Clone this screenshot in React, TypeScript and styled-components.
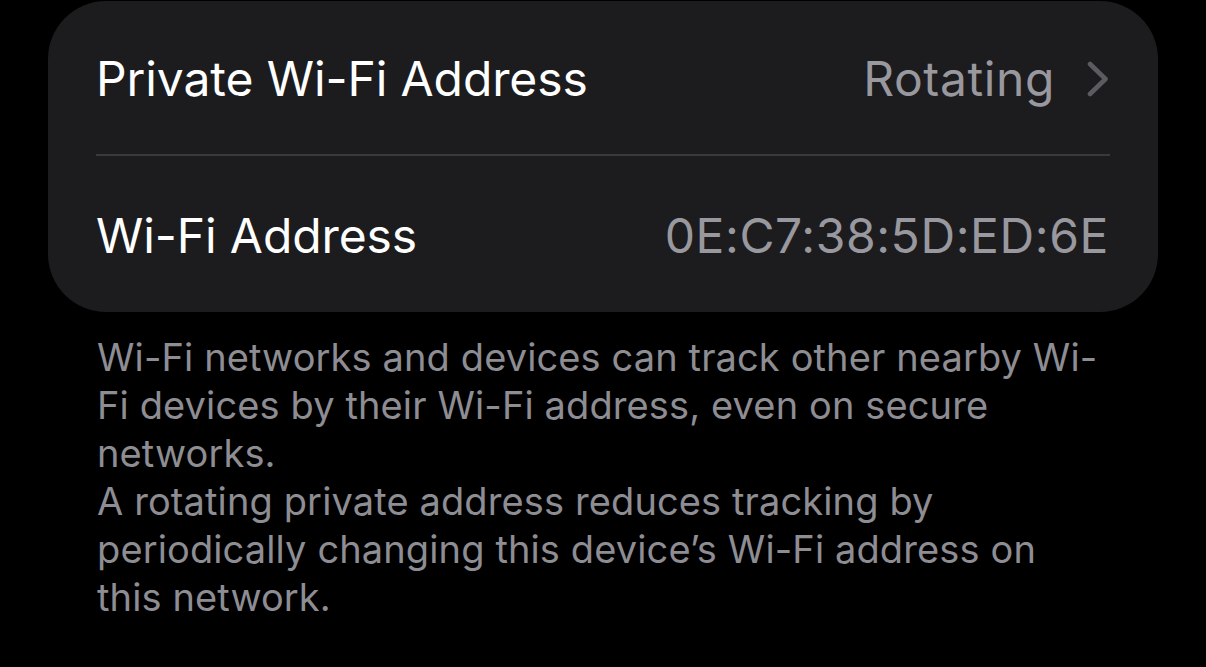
import React from 'react';
import styled, { createGlobalStyle } from 'styled-components';

const GlobalStyle = createGlobalStyle`
  html, body {
    margin: 0;
    padding: 0;
    background: #000;
  }
  body {
    font-family: Inter, "Noto Sans", "Liberation Sans", sans-serif;
    -webkit-font-smoothing: antialiased;
  }
`;

const Page = styled.div`
  width: 1206px;
  height: 667px;
  overflow: hidden;
  background: #000;
  padding-top: 1px;
  box-sizing: border-box;
`;

const Card = styled.div`
  margin: 0 48px;
  background: #1c1c1e;
  border-radius: 58px;
  display: flex;
  flex-direction: column;
`;

const Row = styled.div<{ $h: number }>`
  height: ${p => p.$h}px;
  padding: 0 50px 0 48px;
  display: flex;
  align-items: center;
  justify-content: space-between;
`;

const Divider = styled.div`
  height: 2px;
  margin: 0 48px;
  background: #3a3a3c;
`;

const Title = styled.span`
  color: #fff;
  font-size: 48px;
  letter-spacing: -0.1px;
  padding-top: 2px;
`;

const Value = styled.span`
  color: #98989e;
  font-size: 48px;
  letter-spacing: 0.6px;
  display: flex;
  align-items: center;
  gap: 32px;
  padding-top: 2px;
  margin-right: -1px;
`;

const Chevron = () => (
  <svg width="22" height="36" viewBox="0 0 22 36">
    <polyline
      points="3,3 18.5,18 3,33"
      fill="none"
      stroke="#5b5b60"
      strokeWidth="4.6"
      strokeLinecap="round"
      strokeLinejoin="round"
    />
  </svg>
);

const Footer = styled.div`
  margin: 21px 0 0 97px;
  color: #8d8d93;
  font-size: 38px;
  line-height: 48px;
  letter-spacing: 0.12px;
`;

const Line = styled.div`
  white-space: nowrap;
`;

const lines = [
  'Wi-Fi networks and devices can track other nearby Wi-',
  'Fi devices by their Wi-Fi address, even on secure',
  'networks.',
  'A rotating private address reduces tracking by',
  'periodically changing this device\u2019s Wi-Fi address on',
  'this network.',
];

export default function App() {
  return (
    <>
      <GlobalStyle />
      <Page>
        <Card>
          <Row $h={153}>
            <Title>Private Wi-Fi Address</Title>
            <Value>
              Rotating
              <Chevron />
            </Value>
          </Row>
          <Divider />
          <Row $h={156}>
            <Title>Wi-Fi Address</Title>
            <Value>0E:C7:38:5D:ED:6E</Value>
          </Row>
        </Card>
        <Footer>
          {lines.map(l => (
            <Line key={l}>{l}</Line>
          ))}
        </Footer>
      </Page>
    </>
  );
}
